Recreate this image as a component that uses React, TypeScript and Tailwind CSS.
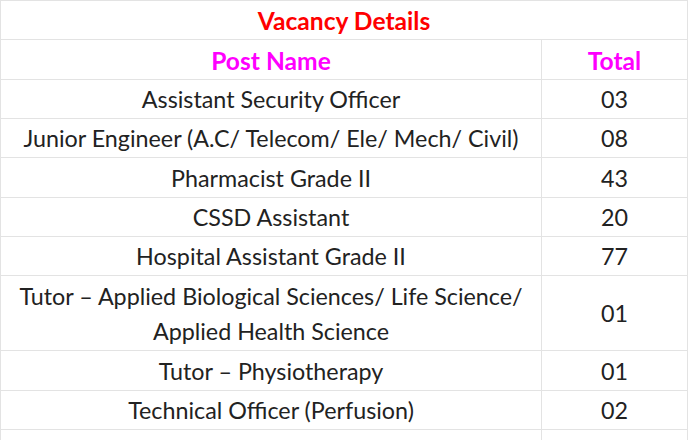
import React from "react";

const rows: { name: React.ReactNode; total: string }[] = [
  { name: "Assistant Security Officer", total: "03" },
  { name: "Junior Engineer (A.C/ Telecom/ Ele/ Mech/ Civil)", total: "08" },
  { name: "Pharmacist Grade II", total: "43" },
  { name: "CSSD Assistant", total: "20" },
  { name: "Hospital Assistant Grade II", total: "77" },
  {
    name: (
      <>
        Tutor – Applied Biological Sciences/ Life Science/
        <br />
        Applied Health Science
      </>
    ),
    total: "01",
  },
  { name: "Tutor – Physiotherapy", total: "01" },
  { name: "Technical Officer (Perfusion)", total: "02" },
];

export default function App() {
  return (
    <div className="w-[689px] h-[440px] overflow-hidden bg-white">
      <table
        className="w-[688px] border-collapse text-center text-[23.3px] leading-[35.67px] text-[#222]"
        style={{ fontFamily: "Lato, 'Open Sans', sans-serif" }}
      >
        <tbody>
          <tr>
            <td colSpan={2} className="border border-[#e3e3e3] pt-[2.33px] pb-[0.33px] text-[24.6px] font-bold text-[#f00]">
              Vacancy Details
            </td>
          </tr>
          <tr>
            <td className="w-[541px] border border-[#e3e3e3] pt-[2.33px] pb-[0.33px] text-[24.6px] font-bold text-[#f0f]">
              Post Name
            </td>
            <td className="border border-[#e3e3e3] pt-[2.33px] pb-[0.33px] text-[24.6px] font-bold text-[#f0f]">Total</td>
          </tr>
          {rows.map((r, i) => (
            <tr key={i}>
              <td className="border border-[#e3e3e3] pt-[2.33px] pb-[0.33px]">{r.name}</td>
              <td className="border border-[#e3e3e3] pt-[2.33px] pb-[0.33px]">{r.total}</td>
            </tr>
          ))}
          <tr>
            <td className="border border-[#e3e3e3] pt-[2.33px] pb-[0.33px]">&nbsp;</td>
            <td className="border border-[#e3e3e3] pt-[2.33px] pb-[0.33px]">&nbsp;</td>
          </tr>
        </tbody>
      </table>
    </div>
  );
}
